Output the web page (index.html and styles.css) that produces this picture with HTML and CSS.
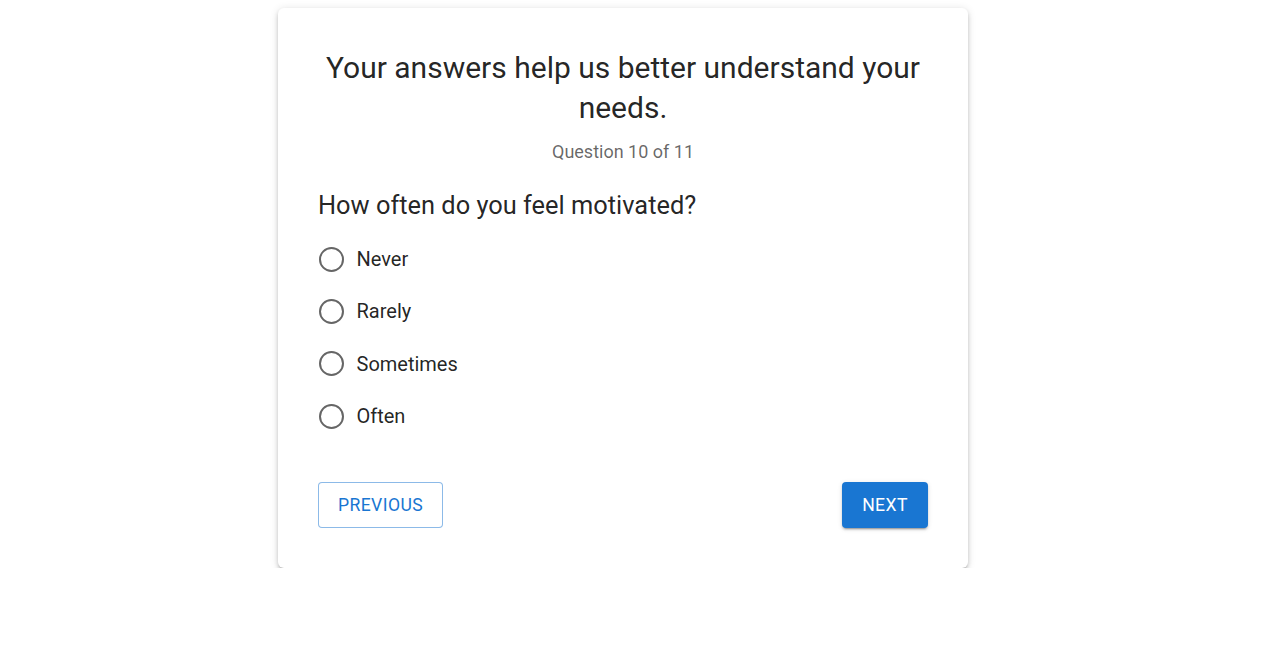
FILE: index.html
```html
<!DOCTYPE html>
<html lang="en">
<head>
<meta charset="utf-8">
<title>Survey</title>
<link rel="stylesheet" href="styles.css">
</head>
<body>
<div class="page">
  <div class="card">
    <h1 class="title">Your answers help us better understand your needs.</h1>
    <p class="progress">Question 10 of 11</p>
    <h2 class="question">How often do you feel motivated?</h2>
    <div class="options">
      <label class="option"><span class="radio"></span><span class="label">Never</span></label>
      <label class="option"><span class="radio"></span><span class="label">Rarely</span></label>
      <label class="option"><span class="radio"></span><span class="label">Sometimes</span></label>
      <label class="option"><span class="radio"></span><span class="label">Often</span></label>
    </div>
    <div class="actions">
      <button class="btn btn-outlined">Previous</button>
      <button class="btn btn-contained">Next</button>
    </div>
  </div>
</div>
</body>
</html>
```
FILE: styles.css
```css
* { box-sizing: border-box; }
html, body { margin: 0; padding: 0; background: #fff; }
body {
  font-family: Roboto, "Liberation Sans", Arial, sans-serif;
  color: rgba(0,0,0,0.87);
}
.page {
  padding: 8px 0 0 278px;
}
.card {
  width: 690px;
  height: 560px;
  background: #fff;
  border-radius: 6px;
  padding: 40px;
  box-shadow: 0 3px 3px -2px rgba(0,0,0,0.2), 0 3px 4px 0 rgba(0,0,0,0.16), 0 1px 8px 0 rgba(0,0,0,0.12);
  display: flex;
  flex-direction: column;
}
.title {
  margin: 0;
  font-size: 30px;
  line-height: 40px;
  font-weight: 400;
  text-align: center;
}
.progress {
  margin: 12px 0 0;
  text-align: center;
  font-size: 18px;
  line-height: 24px;
  color: rgba(0,0,0,0.6);
}
.question {
  margin: 25px 0 0;
  font-size: 25.4px;
  line-height: 32px;
  font-weight: 400;
}
.options {
  margin-top: 12px;
  display: flex;
  flex-direction: column;
}
.option {
  display: flex;
  align-items: center;
  height: 52.3px;
  font-size: 20px;
}
.radio {
  width: 25px;
  height: 25px;
  border: 2.6px solid #666;
  border-radius: 50%;
  margin-right: 13px;
  margin-left: 0.5px;
}
.actions {
  margin-top: auto;
  display: flex;
  justify-content: space-between;
}
.btn {
  font-family: inherit;
  height: 46px;
  border-radius: 4px;
  font-size: 17.6px;
  font-weight: 400;
  text-transform: uppercase;
  letter-spacing: 0.4px;
  padding: 0 0 1px;
  cursor: pointer;
}
.btn-outlined {
  width: 125px;
  background: #fff;
  color: #1976d2;
  border: 1px solid rgba(25,118,210,0.5);
}
.btn-contained {
  width: 86px;
  background: #1976d2;
  color: #fff;
  border: none;
  box-shadow: 0 3px 1px -2px rgba(0,0,0,0.2), 0 2px 2px 0 rgba(0,0,0,0.14), 0 1px 5px 0 rgba(0,0,0,0.12);
}
```
